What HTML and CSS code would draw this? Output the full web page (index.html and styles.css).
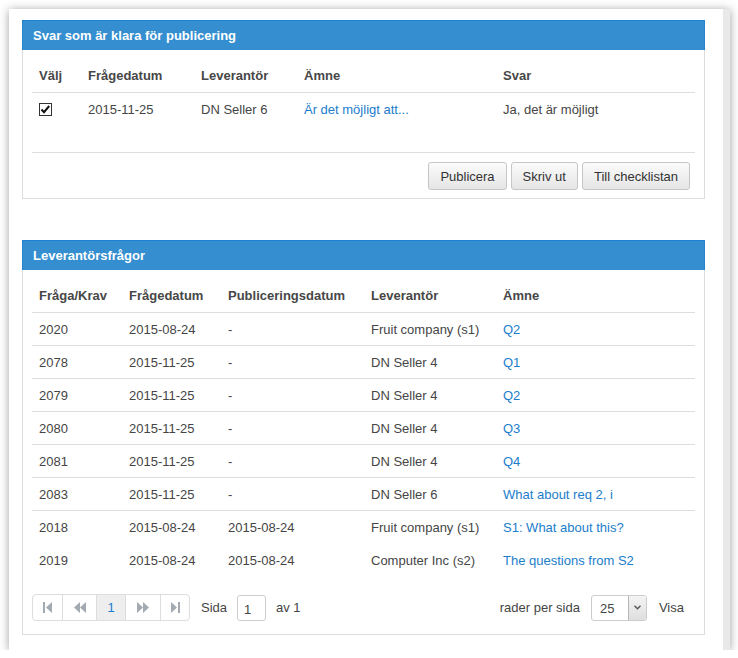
FILE: index.html
```html
<!DOCTYPE html>
<html lang="sv">
<head>
<meta charset="utf-8">
<title>Publicering</title>
<link rel="stylesheet" href="styles.css">
</head>
<body>
<div class="frame">
  <div class="main">
    <section class="panel">
      <div class="panel-heading">Svar som är klara för publicering</div>
      <div class="panel-body">
        <table class="grid grid-answers">
          <thead>
            <tr><th class="c-valj">Välj</th><th class="c-fd">Frågedatum</th><th class="c-lev">Leverantör</th><th class="c-amne">Ämne</th><th>Svar</th></tr>
          </thead>
          <tbody>
            <tr class="plain">
              <td><span class="check"><svg viewBox="0 0 13 13" width="13" height="13"><path d="M2.5 6.5 L5 9.2 L10.2 3" fill="none" stroke="#111" stroke-width="2"/></svg></span></td>
              <td>2015-11-25</td><td>DN Seller 6</td><td><a class="link" href="#">Är det möjligt att...</a></td><td>Ja, det är möjligt</td>
            </tr>
          </tbody>
        </table>
        <div class="actions">
          <button class="btn">Publicera</button>
          <button class="btn">Skriv ut</button>
          <button class="btn">Till checklistan</button>
        </div>
      </div>
    </section>

    <section class="panel panel-second">
      <div class="panel-heading">Leverantörsfrågor</div>
      <div class="panel-body panel-body-2">
        <table class="grid grid-questions">
          <thead>
            <tr><th class="q-id">Fråga/Krav</th><th class="q-fd">Frågedatum</th><th class="q-pd">Publiceringsdatum</th><th class="q-lev">Leverantör</th><th>Ämne</th></tr>
          </thead>
          <tbody>
            <tr><td>2020</td><td>2015-08-24</td><td>-</td><td>Fruit company (s1)</td><td><a class="link" href="#">Q2</a></td></tr>
            <tr><td>2078</td><td>2015-11-25</td><td>-</td><td>DN Seller 4</td><td><a class="link" href="#">Q1</a></td></tr>
            <tr><td>2079</td><td>2015-11-25</td><td>-</td><td>DN Seller 4</td><td><a class="link" href="#">Q2</a></td></tr>
            <tr><td>2080</td><td>2015-11-25</td><td>-</td><td>DN Seller 4</td><td><a class="link" href="#">Q3</a></td></tr>
            <tr><td>2081</td><td>2015-11-25</td><td>-</td><td>DN Seller 4</td><td><a class="link" href="#">Q4</a></td></tr>
            <tr><td>2083</td><td>2015-11-25</td><td>-</td><td>DN Seller 6</td><td><a class="link" href="#">What about req 2, i</a></td></tr>
            <tr class="plain"><td>2018</td><td>2015-08-24</td><td>2015-08-24</td><td>Fruit company (s1)</td><td><a class="link" href="#">S1: What about this?</a></td></tr>
            <tr class="plain"><td>2019</td><td>2015-08-24</td><td>2015-08-24</td><td>Computer Inc (s2)</td><td><a class="link" href="#">The questions from S2</a></td></tr>
          </tbody>
        </table>
        <div class="pager">
          <div class="pager-left">
            <div class="pages">
              <span class="pg pg-first"><svg width="9" height="11" viewBox="0 0 9 11"><rect x="0" y="0" width="2" height="11" fill="#a3aab2"/><path d="M9 0 L3 5.5 L9 11 Z" fill="#a3aab2"/></svg></span>
              <span class="pg pg-prev"><svg width="12" height="11" viewBox="0 0 12 11"><path d="M6 0 L0 5.5 L6 11 Z M12 0 L6 5.5 L12 11 Z" fill="#a3aab2"/></svg></span>
              <span class="pg pg-cur">1</span>
              <span class="pg pg-next"><svg width="12" height="11" viewBox="0 0 12 11"><path d="M0 0 L6 5.5 L0 11 Z M6 0 L12 5.5 L6 11 Z" fill="#a3aab2"/></svg></span>
              <span class="pg pg-last"><svg width="9" height="11" viewBox="0 0 9 11"><path d="M0 0 L6 5.5 L0 11 Z" fill="#a3aab2"/><rect x="7" y="0" width="2" height="11" fill="#a3aab2"/></svg></span>
            </div>
            <span class="pager-label">Sida</span>
            <span class="page-input">1</span>
            <span class="pager-label av">av 1</span>
          </div>
          <div class="pager-right">
            <span class="pager-label">rader per sida</span>
            <span class="select"><span class="select-val">25</span><span class="select-btn"><svg width="7" height="5" viewBox="0 0 7 5"><path d="M0.5 0.8 L3.5 3.8 L6.5 0.8" fill="none" stroke="#555" stroke-width="1.4"/></svg></span></span>
            <span class="pager-label visa">Visa</span>
          </div>
        </div>
      </div>
    </section>
  </div>
  <div class="strip"></div>
</div>
</body>
</html>
```

FILE: styles.css
```css
* { box-sizing: border-box; }

html, body {
  margin: 0;
  padding: 0;
  background: #ffffff;
}

body {
  font-family: "Liberation Sans", Arial, sans-serif;
  font-size: 13px;
  color: #454545;
}

.frame {
  margin: 9px 0 0 9px;
  width: 721px;
  height: 641px;
  display: flex;
  background: #fff;
  box-shadow: 0 1px 9px rgba(0, 0, 0, 0.38);
}

.main {
  flex: 1;
  padding: 11px 18px 0 13px;
}

.strip {
  width: 7px;
  background: #e9e9e9;
}

.panel {
  width: 683px;
  border: 1px solid #dcdcdc;
  border-top: 0;
  background: #fff;
}

.panel-second {
  margin-top: 41px;
}

.panel-heading {
  margin: 0 -1px;
  height: 30px;
  padding: 0 10px;
  line-height: 30px;
  background: #348ecf;
  border: 1px solid #2484cd;
  border-top-color: #1c82d6;
  border-bottom: 0;
  color: #fff;
  font-weight: bold;
  font-size: 13px;
  overflow: hidden;
}

.panel-body {
  padding: 8px 9px 8px;
}

.panel-body-2 {
  padding-bottom: 13px;
}

.grid {
  width: 100%;
  border-collapse: separate;
  border-spacing: 0;
}

.grid th {
  text-align: left;
  font-weight: bold;
  color: #474747;
  padding: 9px 7px 7px;
  line-height: 18px;
  border-bottom: 1px solid #dddddd;
}

.grid td {
  padding: 9px 7px 7px;
  line-height: 16px;
  border-bottom: 1px solid #dddddd;
  white-space: nowrap;
}

.grid tr.plain td {
  border-bottom-color: transparent;
}

.c-valj { width: 49px; }
.c-fd { width: 113px; }
.c-lev { width: 103px; }
.c-amne { width: 199px; }

.q-id { width: 90px; }
.q-fd { width: 99px; }
.q-pd { width: 143px; }
.q-lev { width: 132px; }

.link {
  color: #1b7dcb;
  text-decoration: none;
}

.check {
  display: inline-block;
  width: 13px;
  height: 13px;
  border: 1px solid #333;
  background: #fff;
  vertical-align: -2px;
  position: relative;
}

.check svg {
  position: absolute;
  left: -1px;
  top: -1px;
}

.actions {
  margin-top: 26px;
  border-top: 1px solid #dddddd;
  padding: 9px 5px 0 0;
  display: flex;
  justify-content: flex-end;
  gap: 4px;
}

.btn {
  height: 28px;
  padding: 0 11px;
  font-family: "Liberation Sans", Arial, sans-serif;
  font-size: 13px;
  color: #333;
  background: linear-gradient(#fbfbfb, #e5e5e5);
  border: 1px solid #c6c6c6;
  border-radius: 3px;
}

.pager {
  margin-top: 17px;
  display: flex;
  justify-content: space-between;
  align-items: center;
  height: 27px;
}

.pager-left, .pager-right {
  display: flex;
  align-items: center;
}

.pages {
  display: flex;
  height: 27px;
  border: 1px solid #dddddd;
  border-radius: 4px;
  overflow: hidden;
}

.pg {
  display: flex;
  align-items: center;
  justify-content: center;
  height: 100%;
  border-left: 1px solid #dddddd;
  color: #1b7dcb;
}

.pg:first-child { border-left: 0; }
.pg-first { width: 29px; }
.pg-prev { width: 34px; }
.pg-cur { width: 29px; background: #eeeeee; }
.pg-next { width: 35px; }
.pg-last { width: 29px; }

.pager-label {
  margin-left: 11px;
  color: #454545;
}

.pager-right .pager-label { margin-left: 0; }

.page-input {
  margin-left: 10px;
  width: 29px;
  height: 26px;
  border: 1px solid #cccccc;
  border-radius: 3px;
  padding: 6px 0 0 6px;
  line-height: 16px;
}

.av { margin-left: 10px; }

.select {
  margin-left: 11px;
  display: flex;
  width: 56px;
  height: 26px;
  border: 1px solid #cccccc;
  border-radius: 3px;
  overflow: hidden;
}

.select-val {
  flex: 1;
  padding: 5px 0 0 8px;
  line-height: 16px;
}

.select-btn {
  width: 18px;
  display: flex;
  align-items: center;
  justify-content: center;
  border-left: 1px solid #b5b5b5;
  background: linear-gradient(#f4f4f4, #dedede);
}

.pager-right .visa { margin-left: 12px; margin-right: 11px; }
```
